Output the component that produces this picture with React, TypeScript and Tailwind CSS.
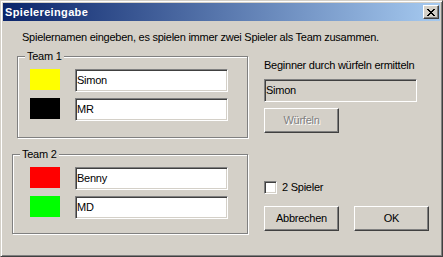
import React from "react";

const sunken =
  "border border-t-[#808080] border-l-[#808080] border-r-white border-b-white shadow-[inset_1px_1px_0_#404040,inset_-1px_-1px_0_#d4d0c8]";
const raised =
  "border border-t-white border-l-white border-r-[#404040] border-b-[#404040] shadow-[inset_-1px_-1px_0_#808080,inset_1px_1px_0_#d4d0c8]";
const group =
  "relative border border-[#808080] shadow-[inset_1px_1px_0_#fff,1px_1px_0_#fff]";

function Row({ color, value }: { color: string; value: string }) {
  return (
    <div className="flex items-start">
      <div className={`w-[30px] h-[21px] ${color}`} />
      <div
        className={`ml-[15px] w-[153px] h-[23px] bg-white flex items-center px-[1px] text-black ${sunken}`}
      >
        {value}
      </div>
    </div>
  );
}

function Btn({ label, disabled }: { label: string; disabled?: boolean }) {
  return (
    <div
      className={`w-[75px] h-[25px] flex items-center justify-center bg-[#d4d0c8] ${raised} ${
        disabled ? "text-[#808080] [text-shadow:1px_1px_0_#fff]" : "text-black"
      }`}
    >
      {label}
    </div>
  );
}

export default function App() {
  return (
    <div
      className="w-[443px] h-[257px] bg-[#d4d0c8] border border-t-[#d4d0c8] border-l-[#d4d0c8] border-r-[#404040] border-b-[#404040] shadow-[inset_1px_1px_0_#fff,inset_-1px_-1px_0_#808080] p-[2px] text-[11px] leading-[13px] text-black overflow-hidden"
      style={{ fontFamily: '"Liberation Sans", Arial, sans-serif' }}
    >
      <div className="h-[18px] flex items-center justify-between pl-[2px] pr-[1px] bg-[linear-gradient(to_right,#0a246a,#a6caf0)]">
        <span className="text-white font-bold tracking-[0.35px]">Spielereingabe</span>
        <div className={`w-[16px] h-[14px] flex items-center justify-center bg-[#d4d0c8] ${raised}`}>
          <svg width="8" height="7" viewBox="0 0 8 7" shapeRendering="crispEdges">
            <path
              fill="#000"
              d="M0 0h2v1H0zM6 0h2v1H6zM1 1h2v1H1zM5 1h2v1H5zM2 2h4v1H2zM3 3h2v1H3zM2 4h4v1H2zM1 5h2v1H1zM5 5h2v1H5zM0 6h2v1H0zM6 6h2v1H6z"
            />
          </svg>
        </div>
      </div>

      <div className="pl-[9px] tracking-[-0.25px]">
        <div className="mt-[10px] ml-[10px]">
          Spielernamen eingeben, es spielen immer zwei Spieler als Team zusammen.
        </div>

        <div className="flex mt-[12px]">
          <div className="flex flex-col w-[236px]">
            <div className={`${group} ml-[5px] w-[231px] h-[82px] pl-[12px] pt-[12px]`}>
              <span className="absolute -top-[7px] left-[7px] px-[2px] bg-[#d4d0c8]">Team 1</span>
              <div className="flex flex-col gap-[6px]">
                <Row color="bg-[#ffff00]" value="Simon" />
                <Row color="bg-black" value="MR" />
              </div>
            </div>
            <div className={`${group} mt-[16px] w-[236px] h-[80px] pl-[17px] pt-[12px]`}>
              <span className="absolute -top-[7px] left-[7px] px-[2px] bg-[#d4d0c8]">Team 2</span>
              <div className="flex flex-col gap-[6px]">
                <Row color="bg-[#ff0000]" value="Benny" />
                <Row color="bg-[#00ff00]" value="MD" />
              </div>
            </div>
          </div>

          <div className="ml-[16px] flex flex-col">
            <div className="mt-[3px]">Beginner durch würfeln ermitteln</div>
            <div
              className={`mt-[7px] w-[153px] h-[23px] bg-[#d4d0c8] flex items-center px-[1px] ${sunken}`}
            >
              Simon
            </div>
            <div className="mt-[6px]">
              <Btn label="Würfeln" disabled />
            </div>
            <div className="mt-[48px] flex items-center">
              <div className={`w-[13px] h-[13px] bg-white ${sunken}`} />
              <span className="ml-[5px]">2 Spieler</span>
            </div>
            <div className="mt-[12px] flex gap-[15px]">
              <Btn label="Abbrechen" />
              <Btn label="OK" />
            </div>
          </div>
        </div>
      </div>
    </div>
  );
}
